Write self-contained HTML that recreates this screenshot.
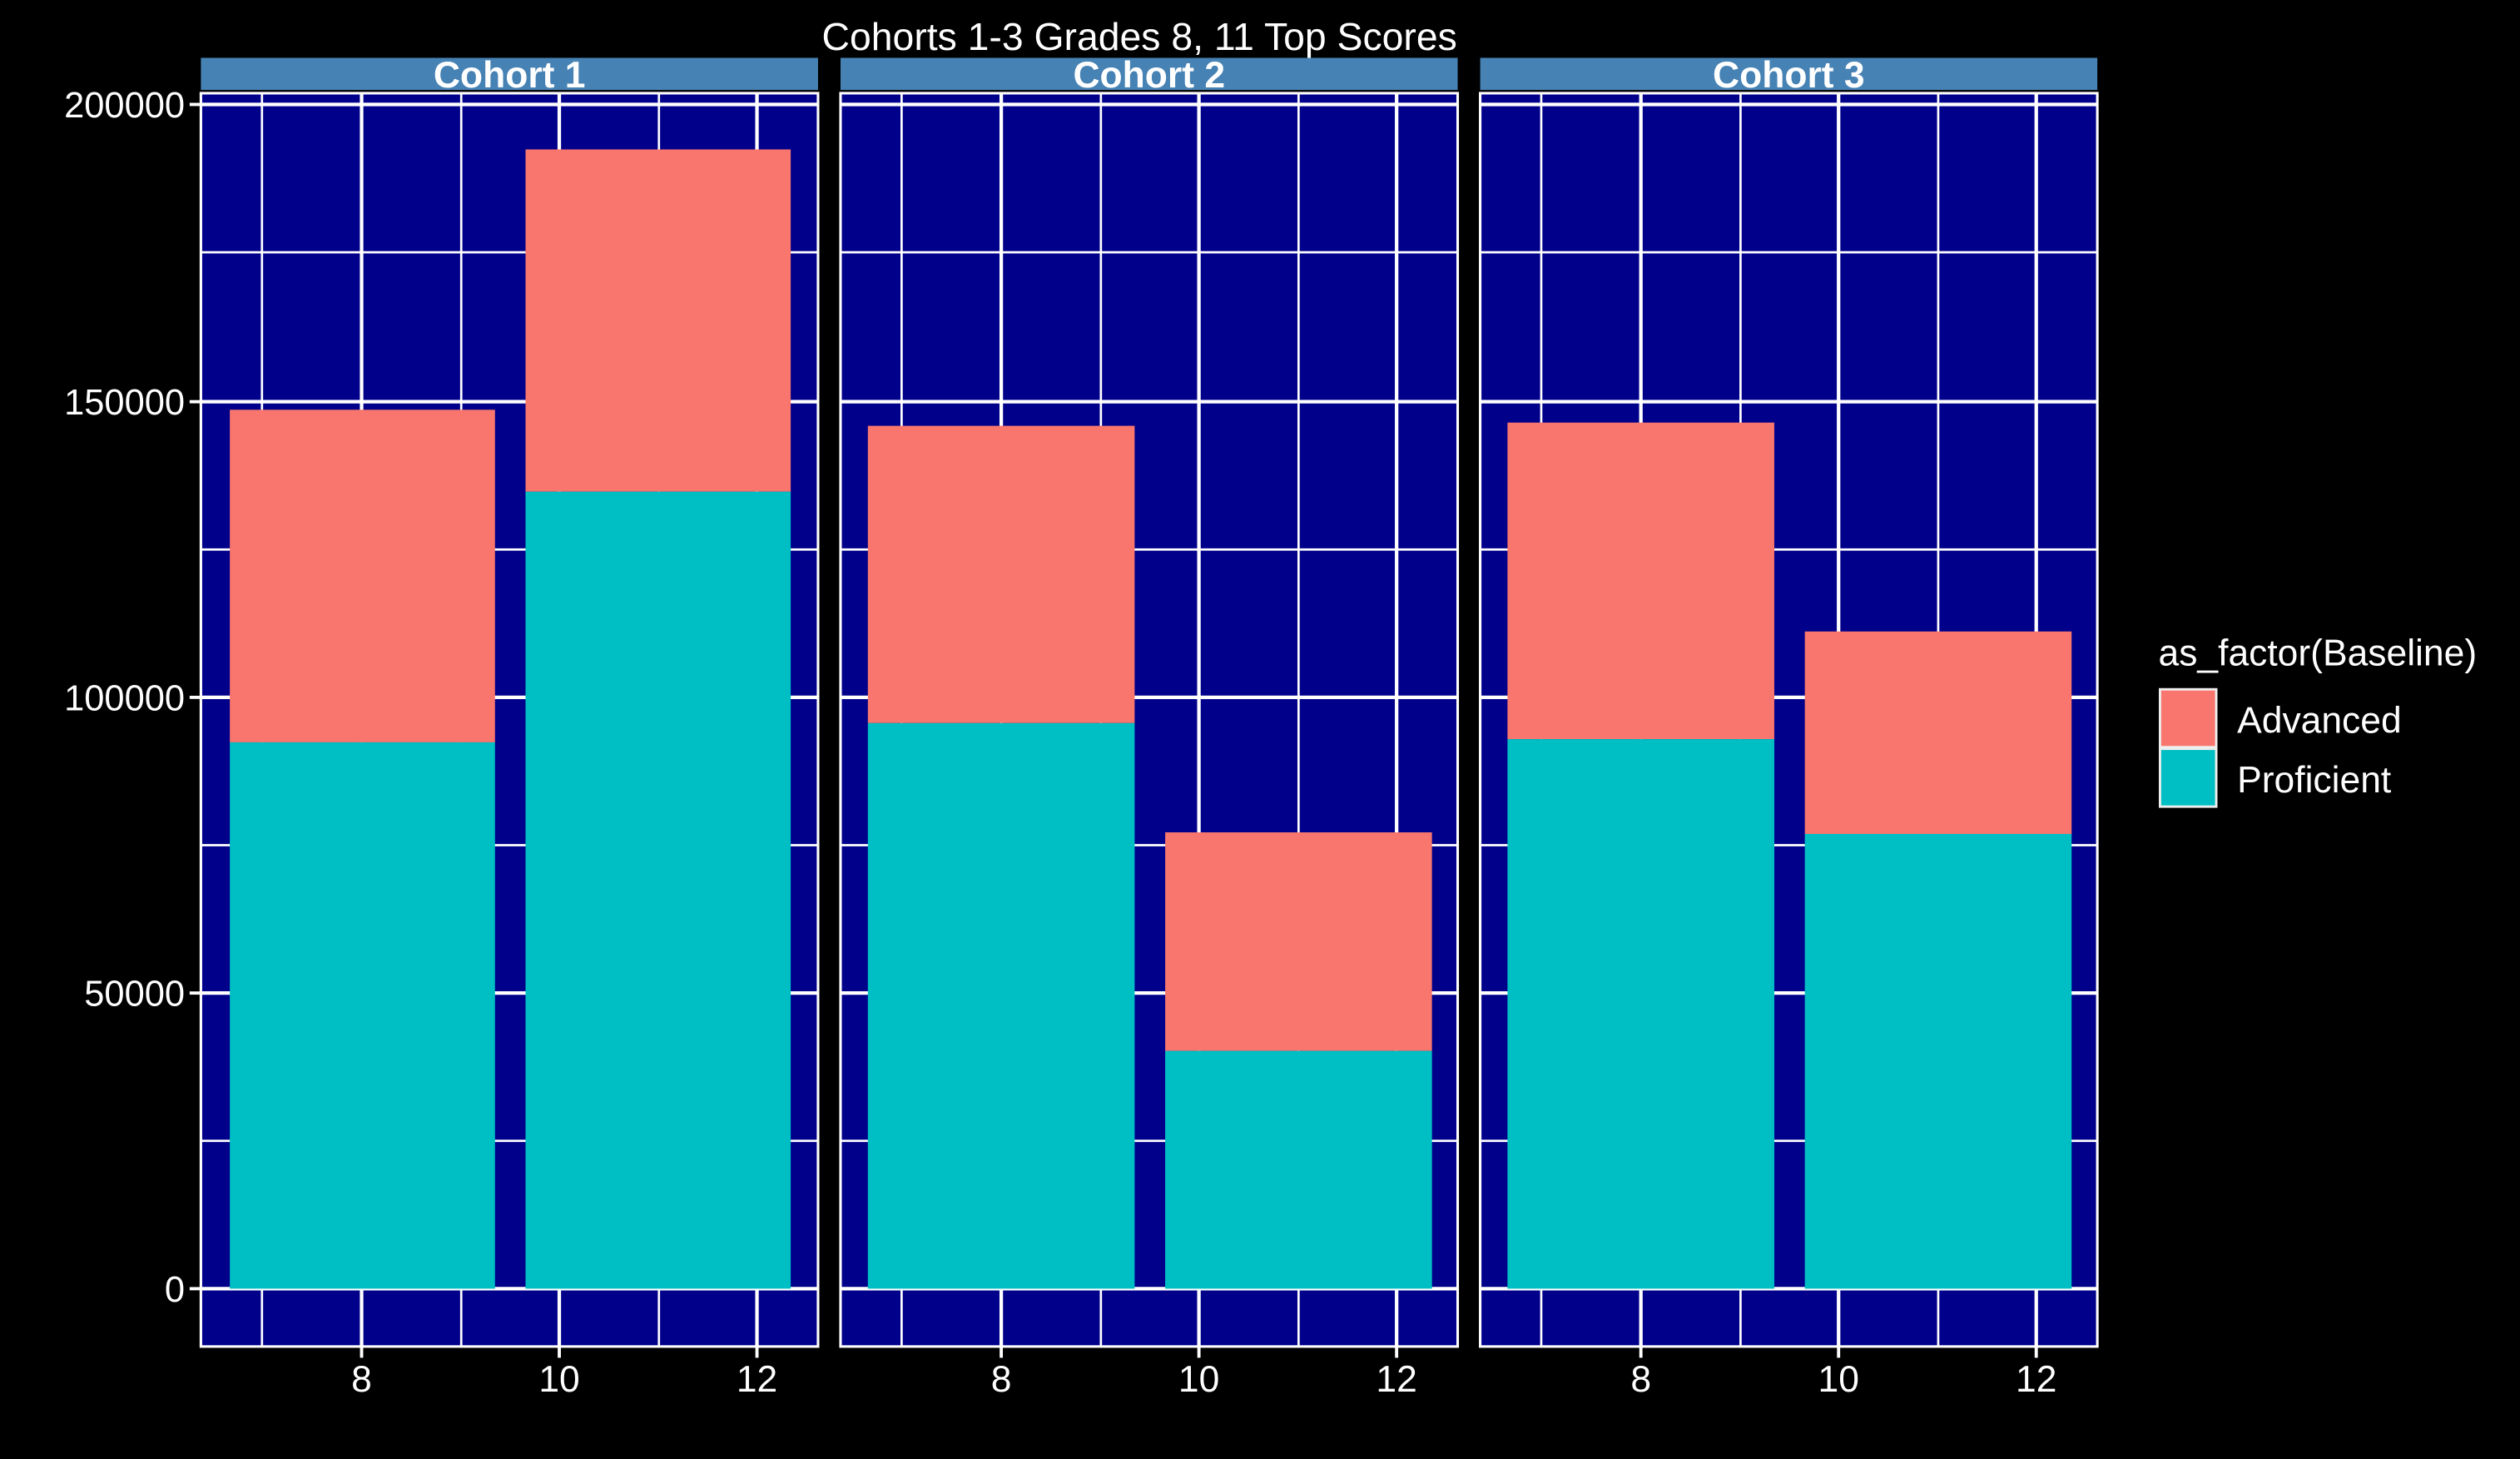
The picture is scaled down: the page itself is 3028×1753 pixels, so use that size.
<!DOCTYPE html>
<html><head><meta charset="utf-8"><style>
html,body{margin:0;padding:0;background:#000;}
svg{display:block;}
text{font-family:"Liberation Sans",sans-serif;fill:#fff;}
</style></head><body>
<svg width="3028" height="1753" viewBox="0 0 1568 908" preserveAspectRatio="none" xmlns="http://www.w3.org/2000/svg">
<rect width="1568" height="908" fill="#000"/>
<text x="709" y="31" font-size="24" text-anchor="middle">Cohorts 1-3 Grades 8, 11 Top Scores</text>
<defs>
<g id="panel">
  <rect x="0" y="0" width="384" height="780" fill="#00008B"/>
  <g stroke="#fff" stroke-width="1.4">
    <line x1="0" x2="384" y1="99" y2="99"/><line x1="0" x2="384" y1="284" y2="284"/>
    <line x1="0" x2="384" y1="468" y2="468"/><line x1="0" x2="384" y1="652" y2="652"/>
    <line x1="38" x2="38" y1="0" y2="780"/><line x1="162" x2="162" y1="0" y2="780"/><line x1="285" x2="285" y1="0" y2="780"/>
  </g>
  <g stroke="#fff" stroke-width="2.2">
    <line x1="0" x2="384" y1="7" y2="7"/><line x1="0" x2="384" y1="192" y2="192"/>
    <line x1="0" x2="384" y1="376" y2="376"/><line x1="0" x2="384" y1="560" y2="560"/>
    <line x1="0" x2="384" y1="744" y2="744"/>
    <line x1="100" x2="100" y1="0" y2="780"/><line x1="223" x2="223" y1="0" y2="780"/><line x1="346" x2="346" y1="0" y2="780"/>
  </g>
</g>
<g id="frame">
  <rect x="0" y="0" width="384" height="780" fill="none" stroke="#fff" stroke-width="1.6"/>
  <g stroke="#fff" stroke-width="2"><line x1="100" x2="100" y1="780" y2="787"/><line x1="223" x2="223" y1="780" y2="787"/><line x1="346" x2="346" y1="780" y2="787"/></g>
  <text x="100" y="808" font-size="23" text-anchor="middle">8</text>
  <text x="223" y="808" font-size="23" text-anchor="middle">10</text>
  <text x="346" y="808" font-size="23" text-anchor="middle">12</text>
  <rect x="0" y="-22" width="384" height="20" fill="#4682B4"/>
</g>
</defs>

<g transform="translate(125,58)">
  <use href="#panel"/>
  <rect x="18" y="197" width="165" height="207" fill="#F8766D"/>
  <rect x="18" y="404" width="165" height="340" fill="#00BFC4"/>
  <rect x="202" y="35" width="165" height="213" fill="#F8766D"/>
  <rect x="202" y="248" width="165" height="496" fill="#00BFC4"/>
  <use href="#frame"/>
  <text x="192" y="-3.5" font-size="23" font-weight="bold" text-anchor="middle">Cohort 1</text>
</g>
<g transform="translate(523,58)">
  <use href="#panel"/>
  <rect x="17" y="207" width="166" height="185" fill="#F8766D"/>
  <rect x="17" y="392" width="166" height="352" fill="#00BFC4"/>
  <rect x="202" y="460" width="166" height="136" fill="#F8766D"/>
  <rect x="202" y="596" width="166" height="148" fill="#00BFC4"/>
  <use href="#frame"/>
  <text x="192" y="-3.5" font-size="23" font-weight="bold" text-anchor="middle">Cohort 2</text>
</g>
<g transform="translate(921,58)">
  <use href="#panel"/>
  <rect x="17" y="205" width="166" height="197" fill="#F8766D"/>
  <rect x="17" y="402" width="166" height="342" fill="#00BFC4"/>
  <rect x="202" y="335" width="166" height="126" fill="#F8766D"/>
  <rect x="202" y="461" width="166" height="283" fill="#00BFC4"/>
  <use href="#frame"/>
  <text x="192" y="-3.5" font-size="23" font-weight="bold" text-anchor="middle">Cohort 3</text>
</g>

<g stroke="#fff" stroke-width="2">
  <line x1="118" x2="125" y1="65" y2="65"/><line x1="118" x2="125" y1="250" y2="250"/>
  <line x1="118" x2="125" y1="434" y2="434"/><line x1="118" x2="125" y1="618" y2="618"/>
  <line x1="118" x2="125" y1="802" y2="802"/>
</g>
<g font-size="22.5" text-anchor="end">
  <text x="115" y="73">200000</text>
  <text x="115" y="258">150000</text>
  <text x="115" y="442">100000</text>
  <text x="115" y="626">50000</text>
  <text x="115" y="810">0</text>
</g>

<text x="1343" y="414" font-size="23">as_factor(Baseline)</text>
<rect x="1344" y="429" width="35" height="36" fill="#F8766D" stroke="#eee" stroke-width="1.5"/>
<rect x="1344" y="466" width="35" height="36" fill="#00BFC4" stroke="#eee" stroke-width="1.5"/>
<text x="1392" y="456" font-size="23">Advanced</text>
<text x="1392" y="493" font-size="23">Proficient</text>
</svg>
</body></html>
